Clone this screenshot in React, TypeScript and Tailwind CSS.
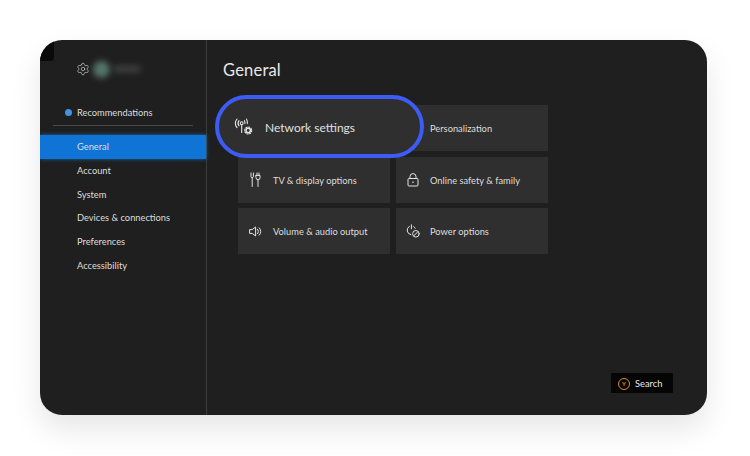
import { Settings } from 'lucide-react';

const navItems = ['General', 'Account', 'System', 'Devices & connections', 'Preferences', 'Accessibility'];

function NetworkIcon() {
  return (
    <svg width="20" height="20" viewBox="0 0 20 20" fill="none" stroke="#e4e4e4" strokeWidth="1.1" strokeLinecap="round">
      <path d="M3 2a7 7 0 0 0 0 8.6" />
      <path d="M12.4 2a7 7 0 0 1 1 4.6" />
      <path d="M5 3.6a4.2 4.2 0 0 0 0 5.2" />
      <path d="M10.4 3.6a4.2 4.2 0 0 1 .5 3" />
      <circle cx="7.7" cy="6.2" r="1.4" />
      <path d="M7.7 7.6V15.5" />
      <circle cx="14.2" cy="13.5" r="2.2" strokeWidth="1.5" />
      <circle cx="14.2" cy="13.5" r="3.5" strokeWidth="1.1" strokeDasharray="1.2 1.55" />
    </svg>
  );
}

function PlugsIcon() {
  return (
    <svg width="11" height="15" viewBox="0 0 11 15" fill="none" stroke="#e4e4e4" strokeWidth="1" strokeLinecap="round">
      <path d="M1 1v3.5a1.2 1.2 0 0 0 2.4 0V1" />
      <path d="M2.2 5.8v8.7" />
      <path d="M6 3.4h4v2.4a2 2 0 0 1-4 0z" />
      <path d="M7 3.4V1M9 3.4V1" />
      <path d="M8 7.8v6.7" />
    </svg>
  );
}

function LockIcon() {
  return (
    <svg width="12" height="14" viewBox="0 0 12 14" fill="none" stroke="#e4e4e4" strokeWidth="1">
      <path d="M3 5.5V3.6a3 3 0 0 1 6 0v1.9" />
      <rect x="1" y="5.5" width="10" height="7.5" rx="1" />
      <circle cx="6" cy="9.3" r="0.8" fill="#e4e4e4" stroke="none" />
    </svg>
  );
}

function SpeakerIcon() {
  return (
    <svg width="13" height="11" viewBox="0 0 13 11" fill="none" stroke="#e4e4e4" strokeWidth="1" strokeLinecap="round" strokeLinejoin="round">
      <path d="M1 3.6h2.2L6.6 1v9L3.2 7.4H1z" />
      <path d="M8.4 3.2a3 3 0 0 1 0 4.6" />
      <path d="M10.2 1.8a5 5 0 0 1 0 7.4" />
    </svg>
  );
}

function PowerLeafIcon() {
  return (
    <svg width="14" height="14" viewBox="0 0 14 14" fill="none" stroke="#e4e4e4" strokeWidth="1" strokeLinecap="round">
      <path d="M3.2 2.4a4.6 4.6 0 0 0 1.7 8.3" />
      <path d="M7.6 2.4a4.6 4.6 0 0 1 1.5 1.9" />
      <path d="M5.4 0.8v4" />
      <circle cx="9.9" cy="9.8" r="3.3" />
      <path d="M8.2 11.5l3.2-3.4" />
    </svg>
  );
}

function Tile({ icon, label, right }: { icon?: React.ReactNode; label: string; right?: boolean }) {
  return (
    <div className="flex h-[46px] items-center bg-[#2f2f2f] pt-[2px] text-[9.3px] text-[#dedede]">
      <span className={`flex shrink-0 justify-center pb-[2px] ${right ? 'w-[34px]' : 'w-[35px]'}`}>{icon}</span>
      <span>{label}</span>
    </div>
  );
}

export default function App() {
  return (
    <div className="h-[456px] w-[750px] overflow-hidden bg-white pl-[40px] pt-[40px] font-['Lato','Liberation_Sans',sans-serif]">
      <div className="relative flex h-[375px] w-[667px] overflow-hidden rounded-[22px] bg-[#1f1f1f] shadow-[0_14px_30px_rgba(0,0,0,0.10)]">
        <div className="absolute left-0 top-0 h-[21px] w-[14px] rounded-br-[4px] bg-[#0a0a0a]" />

        <aside className="w-[167px] shrink-0 border-r border-[#3d3d3d] pt-[19px]">
          <div className="flex h-[20px] items-center pl-[36px]">
            <Settings size={14} strokeWidth={1.1} color="#dcdcdc" />
            <div className="ml-[3px] h-[17px] w-[17px] rounded-full bg-[#56766c] blur-[3px]" />
            <div className="ml-[3px] h-[6px] w-[28px] rounded-full bg-[#444444] blur-[3px]" />
          </div>

          <div className="mx-[13px] mt-[23px] flex h-[24px] items-center border-b border-[#4a4a4a] pb-[2px] pl-[12px] text-[9.3px] text-[#dedede]">
            <span className="mr-[5px] h-[7px] w-[7px] rounded-full bg-[#3f94e4]" />
            Recommendations
          </div>

          <nav className="mt-[9px] flex flex-col">
            {navItems.map((item, i) => (
              <div
                key={item}
                className={`flex h-[23.7px] items-center pl-[37px] pt-[1px] text-[9.3px] text-[#dedede] ${
                  i === 0 ? 'bg-[#0f74d6] shadow-[0_0_4px_rgba(30,130,230,0.7)]' : ''
                }`}
              >
                {item}
              </div>
            ))}
          </nav>
        </aside>

        <main className="relative flex-1 pl-[16px] pt-[19px]">
          <h1 className="text-[16.5px] leading-[22px] tracking-[0.2px] text-[#e8e8e8]">General</h1>

          <div className="ml-[15px] mt-[24px] grid w-[310px] grid-cols-2 gap-x-[6px] gap-y-[5.5px]">
            <Tile label="" />
            <Tile right label="Personalization" />
            <Tile icon={<PlugsIcon />} label="TV & display options" />
            <Tile right icon={<LockIcon />} label="Online safety & family" />
            <Tile icon={<SpeakerIcon />} label="Volume & audio output" />
            <Tile right icon={<PowerLeafIcon />} label="Power options" />
          </div>

          {/* callout over the first tile */}
          <div className="absolute left-[8px] top-[55px] flex h-[63px] w-[209px] items-center rounded-[32px] border-[4px] border-[#3d5cf5] bg-[#2f2f2f] pl-[15px] text-[12px] text-[#e0e0e0]">
            <NetworkIcon />
            <span className="ml-[11px] pt-[3px]">Network settings</span>
          </div>

          <div className="absolute left-[404px] top-[333px] flex h-[20px] w-[62px] items-center rounded-[1px] bg-[#050505] pl-[7px] pt-[1px] text-[9.3px] text-[#e8e8e8]">
            <span className="mr-[5px] flex h-[12px] w-[12px] items-center justify-center rounded-full border border-[#d8901f] text-[6px] font-bold leading-none text-[#d8901f]">
              Y
            </span>
            Search
          </div>
        </main>
      </div>
    </div>
  );
}
